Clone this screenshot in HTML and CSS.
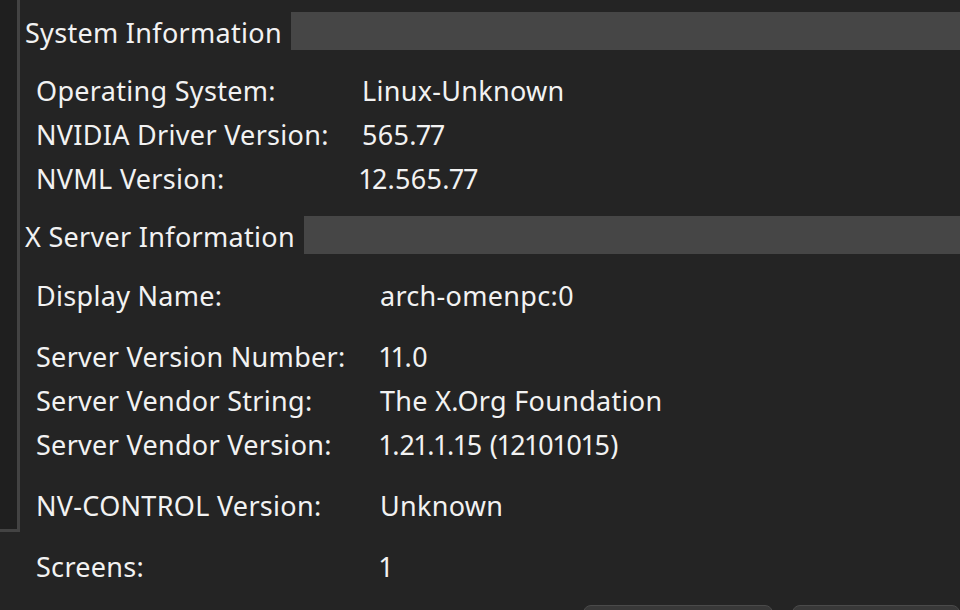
FILE: index.html
```html
<!DOCTYPE html>
<html>
<head>
<meta charset="utf-8">
<link rel="stylesheet" href="styles.css">
</head>
<body>
<div class="window">
  <div class="panes">
    <div class="sidebar"></div>
    <div class="main">
      <div class="section-head head-sys">
        <span class="head-title">System Information</span>
        <span class="head-bar"></span>
      </div>
      <div class="group group-sys first">
        <div class="row"><span class="label">Operating System:</span><span class="value">Linux-Unknown</span></div>
        <div class="row"><span class="label">NVIDIA Driver Version:</span><span class="value">565.77</span></div>
        <div class="row"><span class="label">NVML Version:</span><span class="value nudge">12.565.77</span></div>
      </div>
      <div class="section-head head-x">
        <span class="head-title">X Server Information</span>
        <span class="head-bar"></span>
      </div>
      <div class="group group-x first-x">
        <div class="row"><span class="label">Display Name:</span><span class="value">arch-omenpc:0</span></div>
      </div>
      <div class="group group-x">
        <div class="row"><span class="label">Server Version Number:</span><span class="value">11.0</span></div>
        <div class="row"><span class="label">Server Vendor String:</span><span class="value">The X.Org Foundation</span></div>
        <div class="row"><span class="label">Server Vendor Version:</span><span class="value">1.21.1.15 (12101015)</span></div>
      </div>
      <div class="group group-x">
        <div class="row"><span class="label">NV-CONTROL Version:</span><span class="value">Unknown</span></div>
      </div>
      <div class="group group-x">
        <div class="row"><span class="label">Screens:</span><span class="value">1</span></div>
      </div>
    </div>
  </div>
  <div class="footer">
    <div class="btn btn-a"></div>
    <div class="btn btn-b"></div>
  </div>
</div>
</body>
</html>
```

FILE: styles.css
```css
html, body {
  margin: 0;
  padding: 0;
  background: #242424;
  overflow: hidden;
}
.window {
  width: 960px;
  height: 610px;
  overflow: hidden;
  display: flex;
  flex-direction: column;
  font-family: "Noto Sans", "Open Sans", sans-serif;
  font-size: 27px;
  letter-spacing: 0.3px;
  font-variant-numeric: proportional-nums;
  color: #f2f2f2;
}
.panes {
  height: 605px;
  display: flex;
  flex-shrink: 0;
}
.sidebar {
  width: 17px;
  height: 529px;
  flex-shrink: 0;
  background: #1f1f1f;
  border-right: 3px solid #434343;
  border-bottom: 3px solid #434343;
}
.main {
  flex: 1;
  padding-left: 5px;
  display: flex;
  flex-direction: column;
}
.section-head {
  display: flex;
  align-items: stretch;
  height: 38px;
}
.head-sys {
  margin-top: 12px;
}
.head-x {
  margin-top: 16px;
}
.head-title {
  display: flex;
  align-items: center;
  line-height: 1;
  padding-top: 2px;
}
.head-bar {
  flex: 1;
  background: #464646;
  margin-left: 9px;
}
.group {
  display: flex;
  flex-direction: column;
  margin-top: 17px;
  padding-left: 11px;
}
.group.first {
  margin-top: 18px;
}
.group.first-x {
  margin-top: 19px;
}
.row {
  height: 44px;
  display: flex;
  align-items: center;
}
.label {
  flex-shrink: 0;
}
.group-sys .label {
  width: 326px;
}
.group-x .label {
  width: 344px;
}
.nudge {
  margin-left: -2px;
}
.footer {
  height: 5px;
  overflow: hidden;
  display: flex;
  padding-left: 583px;
  gap: 19px;
}
.btn {
  height: 40px;
  background: #383838;
  border: 1px solid #4a4a4a;
  border-radius: 8px 8px 0 0;
}
.btn-a {
  width: 188px;
}
.btn-b {
  flex: 1;
}
```
